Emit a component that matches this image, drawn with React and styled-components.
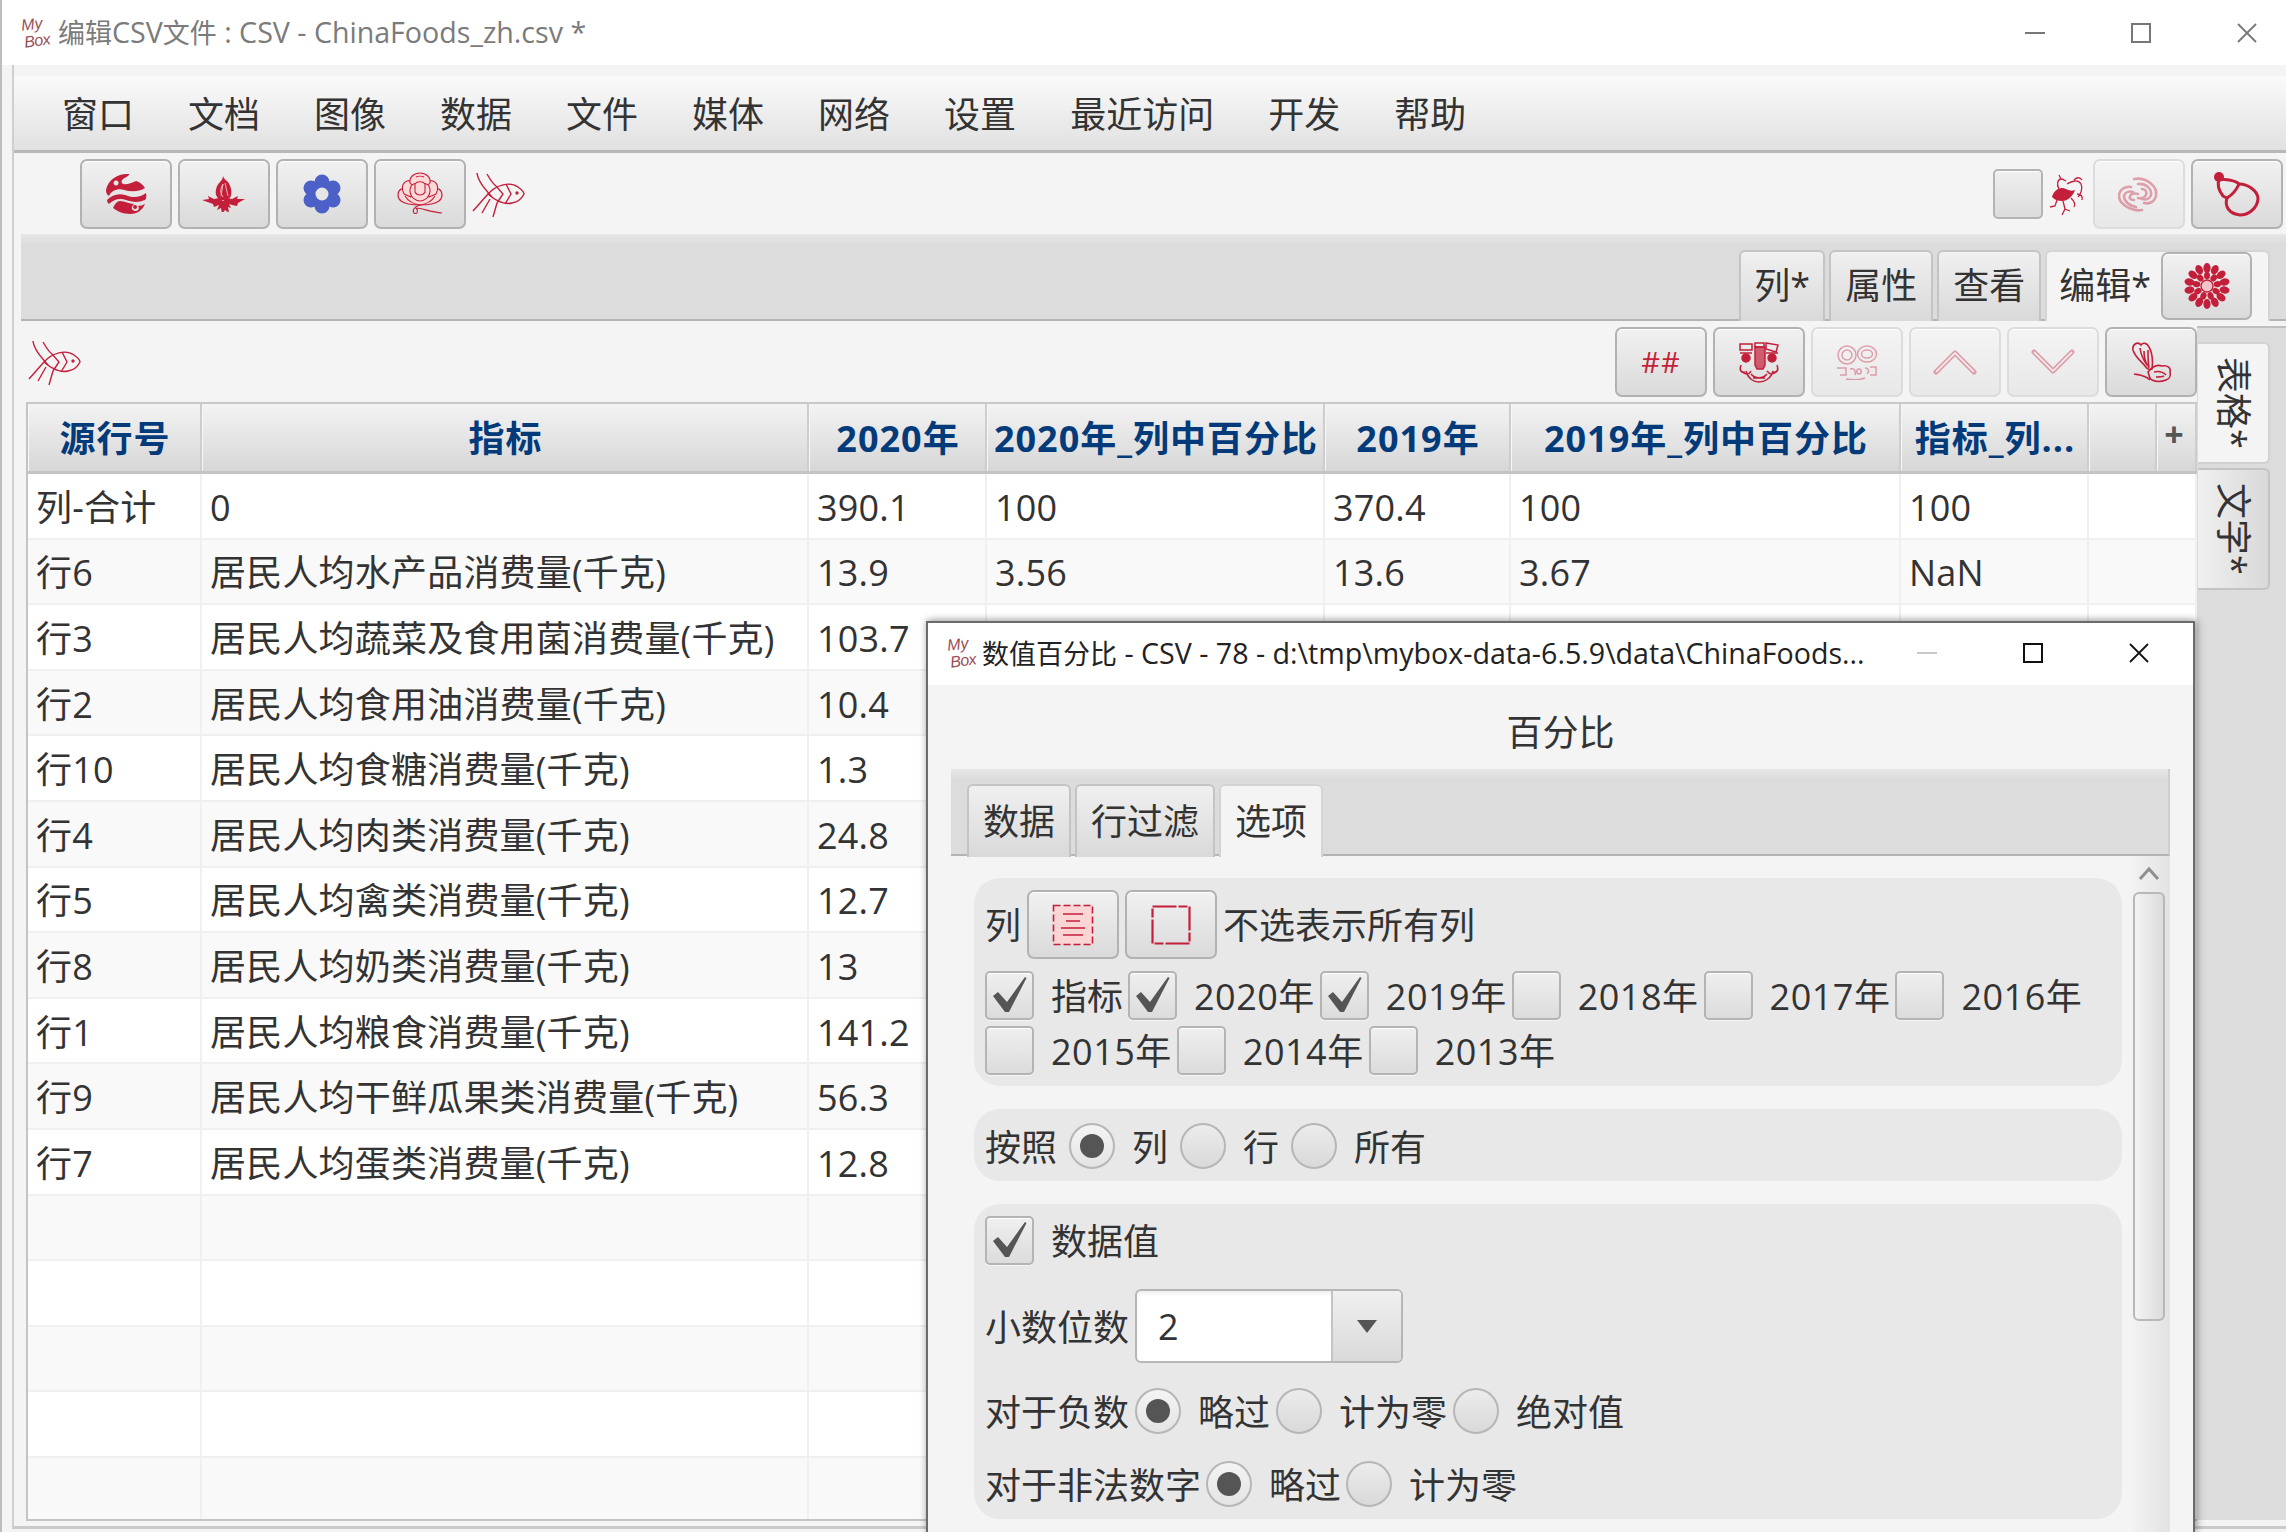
import React from 'react';
import styled, { createGlobalStyle } from 'styled-components';

const Global = createGlobalStyle`
  html, body { margin: 0; padding: 0; background: #f4f4f4; }
  * { box-sizing: border-box; }
`;

const RED = '#c41f3a';
const FONT = '"Open Sans", "Noto Sans CJK SC", "Noto Sans", sans-serif';
const BTN_BG = 'linear-gradient(#f1f1f1, #dadada)';

const Page = styled.div`
  position: relative; width: 2286px; height: 1532px; overflow: hidden;
  background: #f4f4f4; font-family: ${FONT}; color: #333; font-size: 36px; line-height: 44px;
  border-left: 2px solid #bdbdbd;
  display: flex; flex-direction: column;
`;
const TitleBar = styled.div`
  height: ${p => p.$h || 65}px; flex: none; background: #fff; display: flex; align-items: center;
  padding: ${p => p.$pad || '0 29px 0 18px'};
`;
const LogoBox = styled.div`
  width: 34px; height: 34px; flex: none; margin-right: ${p => p.$gap || 4}px;
  font: italic 400 16px/15px "Liberation Sans", sans-serif; color: #9a4d58;
`;
const LogoMy = styled.span` display: block; padding-left: 1px; transform: rotate(-6deg); `;
const LogoBoxWord = styled.span` display: block; padding-left: 4px; margin-top: 2px; letter-spacing: -.5px; transform: rotate(-8deg); `;
const TitleText = styled.div`
  font-size: 27px; line-height: 34px; color: ${p => p.$dark ? '#222' : '#7b7b7b'}; white-space: nowrap;
`;
const Latin = styled.span` font-size: 28.6px; `;
const Controls = styled.div` margin-left: auto; display: flex; align-items: center; gap: 86px; `;
const MenuBar = styled.div`
  height: 77px; flex: none; margin-top: 11px; padding: 0 0 0 21px; display: flex; align-items: center;
  background: linear-gradient(#fafafa, #e1e1e1); border-bottom: 3px solid #b7b7b7;
`;
const MenuItem = styled.div` padding: 4px 27px 0; white-space: nowrap; `;
const Main = styled.div`
  margin-left: 10px; height: 1464px; flex: none; border-left: 2px solid #cfcfcf; border-bottom: 3px solid #cacaca;
  display: flex; flex-direction: column;
`;
const Toolbar = styled.div`
  height: 81px; flex: none; display: flex; align-items: flex-start; justify-content: space-between;
  padding: 6px 3px 0 66px; background: #f4f4f4;
`;
const BtnGroup = styled.div` display: flex; align-items: flex-start; gap: ${p => p.$gap ?? 6}px; `;
const IconButton = styled.div`
  width: ${p => p.$w || 92}px; height: ${p => p.$h || 70}px; flex: none;
  display: flex; align-items: center; justify-content: center;
  border: 2px solid ${p => p.$off ? '#dcdcdc' : '#b2b2b2'}; border-radius: 7px;
  background: ${p => p.$off ? 'linear-gradient(#f4f4f4, #e8e8e8)' : BTN_BG};
  box-shadow: inset 0 1px 0 #fff;
  color: ${RED};
  & > svg { opacity: ${p => p.$off ? 0.38 : 1}; }
`;
const HashText = styled.span` font-size: 29px; line-height: 32px; letter-spacing: 1px; font-weight: 400; `;
const PlainIcon = styled.div` display: flex; margin: ${p => p.$m || '14px 0 0 0'}; `;
const TabHeader = styled.div`
  height: 87px; flex: none; margin-left: 7px; padding: 16px 16px 0 0;
  display: flex; justify-content: ${p => p.$start ? 'flex-start' : 'flex-end'}; gap: 4px;
  background: linear-gradient(#e6e6e6, #dcdcdc 10px); border-bottom: 2px solid #b4b4b4;
`;
const Tab = styled.div`
  height: 71px; margin-bottom: -2px; display: flex; align-items: flex-start; padding: ${p => p.$pad || '0 14px'};
  border: 2px solid ${p => p.$active ? '#d4d4d4' : '#c4c4c4'}; border-bottom: none; border-radius: 6px 6px 0 0;
  background: ${p => p.$active ? '#f4f4f4' : 'linear-gradient(#f0f0f0, #d9d9d9)'};
  white-space: nowrap; line-height: 67px; gap: 10px;
`;
const EditArea = styled.div` flex: 1; display: flex; min-height: 0; `;
const EditLeft = styled.div` width: 2183px; flex: none; padding-left: 12px; display: flex; flex-direction: column; `;
const SubToolbar = styled.div`
  height: 81px; flex: none; display: flex; justify-content: space-between; align-items: flex-start; padding: 6px 0 0 2px;
`;
const Table = styled.div`
  width: 2171px; height: 1119px; flex: none; background: #fff; overflow: hidden;
  border: 2px solid #c4c4c4; border-right: none; border-top-color: #c8c8c8;
`;
const COLS = '174px 607px 178px 338px 186px 390px 188px 108px';
const HeaderRow = styled.div`
  height: 70px; display: grid; grid-template-columns: 174px 607px 178px 338px 186px 390px 188px 68px 40px;
  border-bottom: 3px solid #c4c4c4; background: linear-gradient(#f3f3f3, #d7d7d7);
`;
const HeadCell = styled.div`
  display: flex; align-items: center; justify-content: center; white-space: nowrap; font-weight: 700; color: #033a7a;
  border-right: 2px solid #cdcdcd; box-shadow: inset 1px 0 0 #f7f7f7; letter-spacing: 1px; padding: 3px 0 0 2px;
`;
const Plus = styled.span` font-size: 34px; font-weight: 700; color: #555; line-height: 36px; margin: -10px 0 0 -5px; `;
const Row = styled.div`
  height: 65.6px; display: grid; grid-template-columns: ${COLS};
  background: ${p => p.$odd ? '#f9f9f9' : '#fff'}; border-bottom: 2px solid #f0f0f0;
`;
const Cell = styled.div`
  padding: 4px 0 0 8px; display: flex; align-items: center; white-space: nowrap;
  border-right: 2px solid #f0f0f0; letter-spacing: .2px;
`;
const SideColumn = styled.div`
  flex: 1; background: #dcdcdc; border-top: 2px solid #bfbfbf; margin-top: 5px; margin-bottom: 6px;
  padding: 14px 0 0 1px; display: flex; flex-direction: column; gap: 4px;
`;
const SideTab = styled.div`
  width: 72px; height: 122px; border: 2px solid ${p => p.$active ? '#d2d2d2' : '#c4c4c4'}; border-left: none; border-radius: 0 6px 6px 0;
  background: ${p => p.$active ? '#f4f4f4' : 'linear-gradient(90deg, #f0f0f0, #d9d9d9)'};
  display: flex; align-items: center; justify-content: center;
`;
const SideLabel = styled.span` writing-mode: vertical-rl; text-orientation: sideways; white-space: nowrap; line-height: 40px; `;

const Popup = styled.div`
  position: absolute; left: 924px; top: 621px; width: 1269px; height: 911px;
  background: #f4f4f4; border: 2px solid #6b6b6b; border-bottom: none;
  box-shadow: 2px 0 8px rgba(0,0,0,.35), 0 -2px 6px rgba(0,0,0,.12);
  display: flex; flex-direction: column;
`;
const PopupHeading = styled.div` height: 84px; flex: none; text-align: center; padding-top: 26px; `;
const PopupTabs = styled.div` margin: 0 23px 0 23px; flex: 1; display: flex; flex-direction: column; min-height: 0; `;
const PopupHeader = styled(TabHeader)` margin-left: 0; padding: 15px 0 0 16px; border-right: 2px solid #cfcfcf; `;
const PopupTab = styled(Tab)` height: 73px; line-height: 72px; `;
const ScrollWrap = styled.div` flex: 1; display: flex; min-height: 0; `;
const PanelList = styled.div` flex: 1; padding: 22px 6px 0 23px; display: flex; flex-direction: column; gap: 23px; min-width: 0; `;
const Panel = styled.div`
  background: #e8e8e8; border-radius: 26px; padding: ${p => p.$pad || '12px 0 12px 11px'}; flex: none;
  height: ${p => p.$h}px; display: flex; flex-direction: column;
`;
const Line = styled.div`
  display: flex; align-items: center; flex: none; height: ${p => p.$h || 48}px; margin-top: ${p => p.$top || 0}px;
  gap: ${p => p.$gap ?? 6}px; white-space: nowrap;
`;
const Label = styled.span`
  display: block; padding-top: 3px; min-width: ${p => p.$w || 0}px; letter-spacing: ${p => p.$w ? '.5px' : 0};
`;
const Choice = styled.div` display: flex; align-items: center; gap: 17px; `;
const Check = styled.div`
  width: ${p => p.$size || 49}px; height: ${p => p.$size || 49}px; flex: none; border: 2px solid #b4b4b4; border-radius: 5px;
  background: linear-gradient(#efefef, #dcdcdc); box-shadow: inset 0 1px 0 #fff, 0 1px 0 #f5f5f5;
  display: flex; align-items: center; justify-content: center;
`;
const Radio = styled.div`
  width: 46px; height: 46px; flex: none; border: 2px solid #b6b6b6; border-radius: 50%;
  background: linear-gradient(${p => p.$on ? '#f4f4f4, #e4e4e4' : '#ececec, #d9d9d9'});
  display: flex; align-items: center; justify-content: center;
`;
const RadioDot = styled.div` width: 24px; height: 24px; border-radius: 50%; background: #555; `;
const Combo = styled.div`
  width: 268px; height: 74px; flex: none; display: flex; border: 2px solid #b6b6b6; border-radius: 6px; background: #fff; overflow: hidden;
  box-shadow: inset 0 3px 3px rgba(0,0,0,.06);
`;
const ComboValue = styled.div` flex: 1; padding: 2px 0 0 21px; line-height: 68px; `;
const ComboArrow = styled.div`
  width: 70px; flex: none; background: linear-gradient(#f0f0f0, #d9d9d9); border-left: 2px solid #c4c4c4;
  display: flex; align-items: center; justify-content: center;
`;
const Triangle = styled.div` width: 0; height: 0; border-left: 10px solid transparent; border-right: 10px solid transparent; border-top: 13px solid #555; `;
const ScrollBar = styled.div`
  width: 42px; flex: none; background: linear-gradient(90deg, #f4f4f4, #e3e3e3); display: flex; flex-direction: column; align-items: center;
  padding-top: 10px;
`;
const ScrollArrow = styled.div` width: 22px; height: 14px; flex: none; color: #8f8f8f; display: flex; `;
const Thumb = styled.div`
  width: 32px; height: 429px; margin-top: 12px; flex: none; border: 2px solid #b8b8b8; border-radius: 6px;
  background: linear-gradient(90deg, #f3f3f3, #dcdcdc);
`;

/* ---------- drawings ---------- */
const S = ({ w, h, vb, children, ...rest }) => (
  <svg width={w} height={h} viewBox={vb || `0 0 ${w} ${h}`} fill="none" {...rest}>{children}</svg>
);
const Logo = ({ gap }) => <LogoBox $gap={gap}><LogoMy>My</LogoMy><LogoBoxWord>Box</LogoBoxWord></LogoBox>;
const MinIcon = ({ c }) => <S w={20} h={20}><path d="M0 10h20" stroke={c} strokeWidth="2" /></S>;
const MaxIcon = ({ c }) => <S w={20} h={20}><rect x="1" y="1" width="18" height="18" stroke={c} strokeWidth="2" /></S>;
const CloseIcon = ({ c }) => <S w={20} h={20}><path d="M1 1l18 18M19 1L1 19" stroke={c} strokeWidth="1.8" /></S>;
const SwirlLogo = () => (
  <S w={42} h={42}><g fill={RED}>
    <path fillRule="evenodd" d="M24 1C14 0 3 6 1 17c0 3 1 5 3 6 2-5 9-8 15-6 7 2 15 2 21-2-2-3-5-6-9-7-5 2-9 4-13 3-2-1-2-3 0-5 1-1 4-2 6-4zM11 7.5a2.5 2.5 0 1 0 .1 0z" />
    <path d="M2 27c5-5 11-7 18-5 7 3 15 3 21-2 1 3 0 6-1 7-7 3-13 2-19 0-6-2-12-1-17 4-1-1-2-2-2-4z" />
    <path fillRule="evenodd" d="M8 35c4 3 10 6 17 6 8 0 13-5 15-10-2 1-5 2-7 2 2 3 0 5-3 5-4-1-4-4-1-7-5 0-9-3-14-3-3 0-5 3-7 7zM30 32a2 2 0 1 0 .1 0z" />
  </g></S>
);
const MapleIcon = () => (
  <S w={44} h={36}><g fill={RED}>
    <path d="M21 0c1 3 3 4 5 6 3 4 4 9 3 14l-3 4h-9l-3-5c-1-5 1-10 4-13 2-2 3-4 3-6z" />
    <path d="M0 24l7-1-1-3 6 3 5-1 4 3 4-3 5 1 6-3-1 3 8 0-7 4-1 3-5-1-3-1 2 4-3-1 1 6-4-3-3 4-1-6-4 2 2-5-5 2-1-3z" />
  </g><path d="M21 8l-2 12M23 7l3 13M21 8c-3 5-3 9 0 13" stroke="#efb5bd" strokeWidth="1" /></S>
);
const GearFlower = () => (
  <S w={38} h={40}>
    <g fill="#4c60c8">
      <circle cx="19" cy="8" r="7.5" /><circle cx="19" cy="32" r="7.5" />
      <circle cx="8" cy="14" r="7.5" /><circle cx="30" cy="14" r="7.5" />
      <circle cx="8" cy="26" r="7.5" /><circle cx="30" cy="26" r="7.5" />
      <circle cx="19" cy="20" r="11" />
    </g>
    <circle cx="19" cy="20" r="6.5" fill="#e6e6e6" />
  </S>
);
const Peony = () => (
  <S w={46} h={44}><g stroke={RED} strokeWidth="1.1" fill="#fbd9d9">
    <path d="M4 17c-4 3-4 9 0 12 4 3 10 4 19 4s15-1 19-4c4-3 4-9 0-12-4-2-34-2-38 0z" />
    <path d="M7 22c-3-5-2-11 3-13 4-1 8 0 10 4l-6 12z" />
    <path d="M39 22c3-5 2-11-3-13-4-1-8 0-10 4l6 12z" />
    <path d="M13 11c-1-6 4-10 10-10s11 4 10 10c-3 4-17 4-20 0z" />
    <path d="M14 14c3-4 15-4 18 0 3 7-1 14-9 15-8-1-12-8-9-15z" />
    <path d="M18 12c2-3 8-3 10 0v8c-2 4-8 4-10 0z" />
    <path d="M19 5c2-1 6-1 8 0M8 24c3 5 8 8 15 9 7-1 12-4 15-9" fill="none" />
    <path d="M23 33c-6 2-8 5-6 8 3 2 5-2 2-5 6 0 14 4 26 5" fill="none" />
  </g></S>
);
const Fish = () => (
  <S w={54} h={44}><g stroke={RED} strokeWidth="1.4">
    <path d="M16 21c8-9 22-13 30-7 4 3 6 6 6 7-2 4-6 8-12 9-8 2-16-2-24-9z" />
    <path d="M24 13l7 8-6 9M34 11l5 10-6 10" />
    <path d="M1 38l15-17M5 0c1 8 7 15 15 24M15 1c3 5 5 9 9 12M10 40l8-14M21 44l4-14" />
    <circle cx="45" cy="20" r="1" fill={RED} />
  </g></S>
);
const Phoenix = () => (
  <S w={36} h={44}>
    <path fill={RED} d="M3 25c2-7 8-11 14-8 4 2 6 2 9 1-2 6-7 11-13 11-4 0-7-1-10-4z" />
    <path d="M10 17C7 12 9 7 12 7c2 0 3 1 5 2M12 7l-2-4M18 12c5-3 11-5 14 0 2 4 0 10-3 13M25 8c3-3 6-3 8 0M28 22c4 0 6 2 5 6M22 26c3 3 5 6 3 9M14 29l2 8-3 6M8 28l-2 6-5 1M16 37l5 2" stroke={RED} strokeWidth="1.3" />
  </S>
);
const Spiral = () => (
  <S w={42} h={40}><g stroke={RED} strokeWidth="2.6" strokeLinecap="round">
    <path d="M16 5c12-2 24 7 22 17-2 7-8 8-12 7" />
    <path d="M20 10c8-1 14 5 13 11-1 4-5 5-9 4" />
    <path d="M24 15c4 0 5 3 4 6-1 2-4 4-8 3" />
    <path d="M24 36C14 38 1 30 1 22c0-7 7-10 12-9" />
    <path d="M18 33c-7-1-12-6-12-11 1-4 5-5 9-4" />
    <path d="M16 26c-4 0-5-2-4-4 1-2 4-3 8-2" />
  </g></S>
);
const Gourd = () => (
  <S w={46} h={46}><g stroke={RED} strokeWidth="3">
    <path d="M5 8c-2 6 0 12 4 17l4 2c5-3 9-7 12-14-5-5-13-4-20-5z" />
    <path d="M25 13c9 0 19 7 19 15-1 10-10 16-18 16-10-1-16-8-13-17" />
  </g><circle cx="5" cy="6" r="5" fill={RED} /></S>
);
const Chrysanthemum = () => {
  const outer = Array.from({ length: 14 }, (_, i) => i * 360 / 14);
  const inner = Array.from({ length: 9 }, (_, i) => i * 40);
  return (
    <S w={46} h={46}><g fill={RED}>
      {outer.map(a => <ellipse key={a} cx="23" cy="5" rx="3.6" ry="5" transform={`rotate(${a} 23 23)`} />)}
      {inner.map(a => <ellipse key={a} cx="23" cy="12.5" rx="3" ry="3.8" transform={`rotate(${a} 23 23)`} />)}
      <circle cx="23" cy="23" r="6" fill="#f1c4cb" stroke={RED} strokeWidth="1.4" />
    </g></S>
  );
};
const MaskIcon = () => (
  <S w={42} h={42}><g stroke={RED} strokeWidth="1.5">
    <path d="M2 3h12v6H2zM28 2l12 2-2 7-10-3zM17 2h9v4h-9z" />
    <path d="M17 6v18l2 4h6l2-4V6z" fill={RED} fillOpacity=".7" />
    <circle cx="8" cy="17" r="4" fill={RED} /><circle cx="34" cy="17" r="4" fill={RED} />
    <path d="M2 12h12M28 12h12M3 24c-2 5 0 8 4 7M39 24c2 5 0 8-4 7" />
    <path d="M3 30c5 4 8 4 10 0M29 30c3 4 6 4 10 0M8 30c2 8 8 11 13 11s12-3 14-11M13 33c4 5 12 5 16 0M15 37h12" />
  </g></S>
);
const MaskOff = () => (
  <S w={42} h={36}><g stroke={RED} strokeWidth="1.5">
    <ellipse cx="11" cy="11" rx="9" ry="9" /><ellipse cx="11" cy="11" rx="5" ry="5" />
    <ellipse cx="31" cy="10" rx="9.5" ry="8" /><ellipse cx="31" cy="10" rx="5.5" ry="4" />
    <path d="M1 24h9v7H4M14 25c4-1 6 1 5 6M23 25c3 0 3 5 0 5s-3-5 0-5M29 24c3 0 5 3 2 6M34 23h6v8h-6M10 35c7 1 14 1 19-1" />
  </g></S>
);
const ChevUp = () => (
  <S w={44} h={26}>
    <path d="M3 23L22 4l19 19" stroke={RED} strokeWidth="5" strokeLinecap="round" strokeLinejoin="round" />
    <path d="M3 23L22 4l19 19" stroke="#fff" strokeWidth="1.6" strokeLinejoin="round" />
  </S>
);
const ChevDown = () => (
  <S w={44} h={26}>
    <path d="M3 3l19 19L41 3" stroke={RED} strokeWidth="5" strokeLinecap="round" strokeLinejoin="round" />
    <path d="M3 3l19 19L41 3" stroke="#fff" strokeWidth="1.6" strokeLinejoin="round" />
  </S>
);
const Petal = () => (
  <S w={40} h={42}><g stroke={RED} strokeWidth="1.6">
    <path d="M2 9C1 3 7 0 10 4c2-3 6-2 8 2 4 7 4 14 3 22-2 1-5 0-7-3C10 20 4 16 2 9z" />
    <path d="M9 7c1 7 4 13 7 17M17 9c0 7 0 12 1 18M13 10c0 7 1 11 4 15" />
    <path d="M17 31c4-5 9-8 14-6 6-1 9 2 8 6 1 4-1 7-4 8-5 2-10 2-14 0-3-1-2-3-4-8zM3 33c6 1 11 1 16 6" />
    <path d="M23 31c4-1 9 0 12 3M25 36c3 0 6 0 8-1" />
  </g></S>
);
const DocSel = () => (
  <S w={42} h={42}>
    <rect x="1.5" y="1.5" width="39" height="39" fill="#fbd4d4" stroke={RED} strokeWidth="1.6" strokeDasharray="7 3" />
    <path d="M11 10h20M14 17h14M9 24h24M11 31h20" stroke={RED} strokeWidth="1.6" />
  </S>
);
const DocEmpty = () => (
  <S w={40} h={40}><rect x="1.5" y="1.5" width="37" height="37" stroke={RED} strokeWidth="2.2" strokeDasharray="24 2 9 2" /></S>
);
const Tick = () => (
  <S w={35} h={37} style={{ marginTop: -2 }}>
    <path d="M1 20l5-4 9 10L33 1l1.5 1L17 36h-4z" fill="#555" />
  </S>
);

const Ticked = ({ on, w, children }) => (
  <Choice><Check>{on && <Tick />}</Check><Label $w={w}>{children}</Label></Choice>
);
const Opt = ({ on, children }) => (
  <Choice><Radio $on={on}>{on && <RadioDot />}</Radio><Label>{children}</Label></Choice>
);

const MENU = ['窗口', '文档', '图像', '数据', '文件', '媒体', '网络', '设置', '最近访问', '开发', '帮助'];
const HEAD = ['源行号', '指标', '2020年', '2020年_列中百分比', '2019年', '2019年_列中百分比', '指标_列...', ''];
const ROWS = [
  ['列-合计', '0', '390.1', '100', '370.4', '100', '100'],
  ['行6', '居民人均水产品消费量(千克)', '13.9', '3.56', '13.6', '3.67', 'NaN'],
  ['行3', '居民人均蔬菜及食用菌消费量(千克)', '103.7'],
  ['行2', '居民人均食用油消费量(千克)', '10.4'],
  ['行10', '居民人均食糖消费量(千克)', '1.3'],
  ['行4', '居民人均肉类消费量(千克)', '24.8'],
  ['行5', '居民人均禽类消费量(千克)', '12.7'],
  ['行8', '居民人均奶类消费量(千克)', '13'],
  ['行1', '居民人均粮食消费量(千克)', '141.2'],
  ['行9', '居民人均干鲜瓜果类消费量(千克)', '56.3'],
  ['行7', '居民人均蛋类消费量(千克)', '12.8'],
  [], [], [], [], [],
];
const CELLS = [0, 1, 2, 3, 4, 5, 6, 7];

export default function App() {
  return (
    <Page>
      <Global />
      <TitleBar>
        <Logo />
        <TitleText>编辑<Latin>CSV</Latin>文件<Latin> : CSV - ChinaFoods_zh.csv *</Latin></TitleText>
        <Controls><MinIcon c="#777" /><MaxIcon c="#777" /><CloseIcon c="#777" /></Controls>
      </TitleBar>
      <Main>
        <MenuBar>{MENU.map(m => <MenuItem key={m}>{m}</MenuItem>)}</MenuBar>
        <Toolbar>
          <BtnGroup>
            <IconButton><SwirlLogo /></IconButton>
            <IconButton><MapleIcon /></IconButton>
            <IconButton><GearFlower /></IconButton>
            <IconButton><Peony /></IconButton>
            <PlainIcon><Fish /></PlainIcon>
          </BtnGroup>
          <BtnGroup>
            <PlainIcon $m="10px 0 0 0"><Check $size={50} /></PlainIcon>
            <PlainIcon $m="13px 2px 0 0"><Phoenix /></PlainIcon>
            <IconButton $off><Spiral /></IconButton>
            <IconButton><Gourd /></IconButton>
          </BtnGroup>
        </Toolbar>
        <TabHeader>
          <Tab $pad="0 13px">列*</Tab>
          <Tab>属性</Tab>
          <Tab>查看</Tab>
          <Tab $active $pad="0 16px 0 12px">编辑*<IconButton $h={68} $w={91}><Chrysanthemum /></IconButton></Tab>
        </TabHeader>
        <EditArea>
          <EditLeft>
            <SubToolbar>
              <PlainIcon $m="14px 0 0 0"><Fish /></PlainIcon>
              <BtnGroup>
                <IconButton><HashText>##</HashText></IconButton>
                <IconButton><MaskIcon /></IconButton>
                <IconButton $off><MaskOff /></IconButton>
                <IconButton $off><ChevUp /></IconButton>
                <IconButton $off><ChevDown /></IconButton>
                <IconButton><Petal /></IconButton>
              </BtnGroup>
            </SubToolbar>
            <Table>
              <HeaderRow>
                {HEAD.map((h, i) => <HeadCell key={i}>{h}</HeadCell>)}
                <HeadCell><Plus>+</Plus></HeadCell>
              </HeaderRow>
              {ROWS.map((r, i) => (
                <Row key={i} $odd={i % 2 === 1}>
                  {CELLS.map(c => <Cell key={c}>{r[c] ?? ''}</Cell>)}
                </Row>
              ))}
            </Table>
          </EditLeft>
          <SideColumn>
            <SideTab $active><SideLabel>表格*</SideLabel></SideTab>
            <SideTab><SideLabel>文字*</SideLabel></SideTab>
          </SideColumn>
        </EditArea>
      </Main>

      <Popup>
        <TitleBar $h={62} $pad="0 44px 2px 18px">
          <Logo gap={2} />
          <TitleText $dark>数值百分比<Latin> - CSV - 78 - d:\tmp\mybox-data-6.5.9\data\ChinaFoods...</Latin></TitleText>
          <Controls><MinIcon c="#c8c8c8" /><MaxIcon c="#111" /><CloseIcon c="#111" /></Controls>
        </TitleBar>
        <PopupHeading>百分比</PopupHeading>
        <PopupTabs>
          <PopupHeader $start>
            <PopupTab>数据</PopupTab>
            <PopupTab>行过滤</PopupTab>
            <PopupTab $active>选项</PopupTab>
          </PopupHeader>
          <ScrollWrap>
            <PanelList>
              <Panel $h={208}>
                <Line $h={69} $gap={6}>
                  <Label>列</Label>
                  <IconButton $h={69} $w={92}><DocSel /></IconButton>
                  <IconButton $h={69} $w={92}><DocEmpty /></IconButton>
                  <Label>不选表示所有列</Label>
                </Line>
                <Line $top={12} $gap={5}>
                  <Ticked on>指标</Ticked>
                  <Ticked on w={120}>2020年</Ticked>
                  <Ticked on w={120}>2019年</Ticked>
                  <Ticked w={120}>2018年</Ticked>
                  <Ticked w={120}>2017年</Ticked>
                  <Ticked w={120}>2016年</Ticked>
                </Line>
                <Line $top={7} $gap={5}>
                  <Ticked w={120}>2015年</Ticked>
                  <Ticked w={120}>2014年</Ticked>
                  <Ticked w={120}>2013年</Ticked>
                </Line>
              </Panel>
              <Panel $h={72} $pad="14px 0 0 11px">
                <Line $h={46} $gap={12}>
                  <Label>按照</Label>
                  <Opt on>列</Opt>
                  <Opt>行</Opt>
                  <Opt>所有</Opt>
                </Line>
              </Panel>
              <Panel $h={315}>
                <Line $h={49} $gap={6}><Ticked on>数据值</Ticked></Line>
                <Line $h={74} $top={24}>
                  <Label>小数位数</Label>
                  <Combo><ComboValue>2</ComboValue><ComboArrow><Triangle /></ComboArrow></Combo>
                </Line>
                <Line $h={46} $top={25} $gap={6}>
                  <Label>对于负数</Label>
                  <Opt on>略过</Opt>
                  <Opt>计为零</Opt>
                  <Opt>绝对值</Opt>
                </Line>
                <Line $h={46} $top={27} $gap={5}>
                  <Label>对于非法数字</Label>
                  <Opt on>略过</Opt>
                  <Opt>计为零</Opt>
                </Line>
              </Panel>
            </PanelList>
            <ScrollBar>
              <ScrollArrow><S w={22} h={14}><path d="M2 13L11 3l9 10" stroke="currentColor" strokeWidth="3" /></S></ScrollArrow>
              <Thumb />
            </ScrollBar>
          </ScrollWrap>
        </PopupTabs>
      </Popup>
    </Page>
  );
}
